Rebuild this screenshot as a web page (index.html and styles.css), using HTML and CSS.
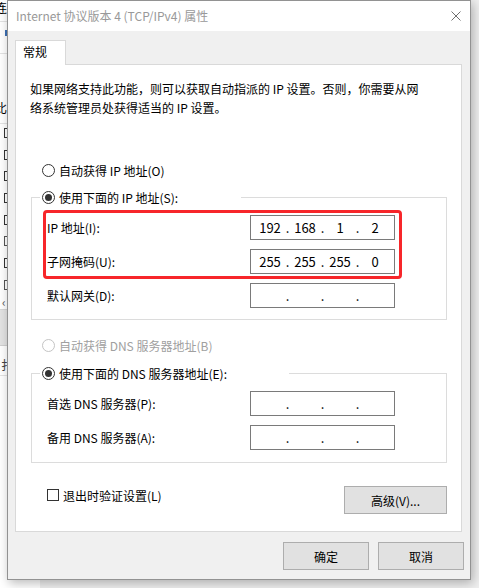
FILE: index.html
```html
<!DOCTYPE html>
<html lang="zh-CN">
<head>
  <meta charset="UTF-8">
  <title>Internet 协议版本 4 (TCP/IPv4) 属性</title>
  <link rel="stylesheet" href="styles.css">
</head>
<body>

<div class="desk">
  <!-- fenêtre derrière la boîte de dialogue -->
  <div class="back-win">
    <div class="bw-title"><span>连</span></div>
    <div class="bw-tool"><span class="bw-mark"></span></div>
    <div class="bw-head"><span>比</span></div>
    <div class="bw-list">
      <span class="bw-box on"></span>
      <span class="bw-box on"></span>
      <span class="bw-box on"></span>
      <span class="bw-box on"></span>
      <span class="bw-box on"></span>
      <span class="bw-box"></span>
      <span class="bw-box on"></span>
      <span class="bw-box"></span>
    </div>
    <div class="bw-scroll">‹</div>
    <div class="bw-band"></div>
    <div class="bw-foot"><span>扌</span></div>
  </div>

  <div class="dialog">
    <div class="titlebar">
      <span class="title">Internet 协议版本 4 (TCP/IPv4) 属性</span>
      <svg class="close" width="10" height="10" viewBox="0 0 10 10">
        <path d="M0.5 0.5 L9.5 9.5 M9.5 0.5 L0.5 9.5" stroke="#707070" stroke-width="1" fill="none"/>
      </svg>
    </div>

    <div class="tabs">
      <div class="tab">常规</div>
    </div>

    <div class="panel">
      <p class="intro">如果网络支持此功能，则可以获取自动指派的 IP 设置。否则，你需要从网<br>络系统管理员处获得适当的 IP 设置。</p>

      <div class="radio first"><span class="dot"></span>自动获得 IP 地址(O)</div>

      <fieldset class="group">
        <legend class="legend-ip"><span class="radio"><span class="dot on"></span>使用下面的 IP 地址(S):</span></legend>
        <div class="hl">
          <div class="field">
            <span>IP 地址(I):</span>
            <div class="ip"><span>192</span><i>.</i><span>168</span><i>.</i><span>1</span><i>.</i><span>2</span></div>
          </div>
          <div class="field">
            <span>子网掩码(U):</span>
            <div class="ip"><span>255</span><i>.</i><span>255</span><i>.</i><span>255</span><i>.</i><span>0</span></div>
          </div>
        </div>
        <div class="field gw">
          <span>默认网关(D):</span>
          <div class="ip"><span></span><i>.</i><span></span><i>.</i><span></span><i>.</i><span></span></div>
        </div>
      </fieldset>

      <div class="radio off"><span class="dot"></span>自动获得 DNS 服务器地址(B)</div>

      <fieldset class="group dns">
        <legend class="legend-dns"><span class="radio"><span class="dot on"></span>使用下面的 DNS 服务器地址(E):</span></legend>
        <div class="rows">
          <div class="field">
            <span>首选 DNS 服务器(P):</span>
            <div class="ip"><span></span><i>.</i><span></span><i>.</i><span></span><i>.</i><span></span></div>
          </div>
          <div class="field">
            <span>备用 DNS 服务器(A):</span>
            <div class="ip"><span></span><i>.</i><span></span><i>.</i><span></span><i>.</i><span></span></div>
          </div>
        </div>
      </fieldset>

      <div class="bottom-row">
        <div class="check"><span class="box"></span>退出时验证设置(L)</div>
        <button class="btn adv">高级(V)...</button>
      </div>
    </div>

    <div class="footer">
      <button class="btn">确定</button>
      <button class="btn">取消</button>
    </div>
  </div>
</div>

</body>
</html>
```

FILE: styles.css
```css
* {
  box-sizing: border-box;
}

body {
  margin: 0;
  width: 479px;
  height: 588px;
  overflow: hidden;
  background: #efefef;
  font-family: "Noto Sans CJK SC", "Noto Sans", sans-serif;
  font-size: 12px;
  color: #000;
}

.desk {
  position: relative;
  width: 479px;
  height: 588px;
}

/* fenêtre du fond */
.back-win {
  width: 40px;
  height: 588px;
  background: #fff;
  overflow: hidden;
  display: flex;
  flex-direction: column;
}

.back-win > div {
  display: flex;
  justify-content: flex-start;
}

.bw-title {
  height: 22px;
  border-bottom: 1px solid #e3e3e3;
  padding-top: 1px;
  line-height: 14px;
}

.bw-title span,
.bw-head span {
  margin-left: -5px;
}

.bw-tool {
  height: 32px;
  border-bottom: 1px solid #e3e3e3;
  padding: 8px 0 0 5px;
}

.bw-mark {
  width: 2px;
  height: 6px;
  background: #3c6fb4;
}

.bw-head {
  height: 70px;
  border-bottom: 1px solid #e3e3e3;
  align-items: flex-end;
  padding-bottom: 8px;
  line-height: 14px;
}

.bw-list {
  flex-direction: column;
  padding: 4px 0 0 4px;
  gap: 11.7px;
}

.bw-box {
  width: 10px;
  height: 10px;
  border: 1px solid #555;
  background: #fff;
}

.bw-box.on {
  border-color: #333;
  background: linear-gradient(#fff 30%, #333 30%, #333 60%, #fff 60%) no-repeat 3px 1px / 3px 6px, #fff;
}

.bw-scroll {
  height: 14px;
  padding-left: 2px;
  margin-top: 6px;
  line-height: 12px;
  color: #555;
  border-bottom: 1px solid #d6d6d6;
}

.bw-band {
  height: 36px;
  background: #e3e3e3;
  border-bottom: 1px solid #d0d0d0;
}

.bw-foot {
  height: 30px;
  padding: 10px 0 0 1px;
  color: #444;
  border-bottom: 1px solid #e3e3e3;
}

/* boîte de dialogue */
.dialog {
  position: absolute;
  left: 7px;
  top: 0;
  width: 464px;
  height: 580px;
  border: 1px solid #929292;
  background: #f0f0f0;
  box-shadow: 2px 3px 10px rgba(0, 0, 0, 0.28);
  display: flex;
  flex-direction: column;
}

.titlebar {
  height: 30px;
  flex: none;
  background: #fff;
  display: flex;
  align-items: center;
  padding: 0 9px 1px 8px;
  color: #999;
}

.titlebar .close {
  margin-left: auto;
}

.tabs {
  display: flex;
  height: 24px;
  flex: none;
  margin: 9px 0 0 7px;
}

.tab {
  position: relative;
  z-index: 1;
  width: 51px;
  height: 25px;
  background: #fff;
  border: 1px solid #d9d9d9;
  border-bottom: none;
  padding-left: 7px;
  line-height: 22px;
}

.panel {
  flex: none;
  height: 468px;
  margin: 0 8px 0 7px;
  background: #fff;
  border: 1px solid #d9d9d9;
  padding: 0 14px 0 15px;
}

.intro {
  margin: 14px 0 0 -1px;
  line-height: 19px;
}

.radio {
  display: flex;
  align-items: center;
  height: 16px;
  gap: 4px;
  padding-left: 11px;
}

.radio.first {
  margin-top: 45px;
}

.radio.off {
  margin-top: 17px;
  color: #a0a0a0;
}

.dot {
  width: 13px;
  height: 13px;
  border-radius: 50%;
  border: 1px solid #333;
  background: #fff;
  display: flex;
  align-items: center;
  justify-content: center;
}

.radio.off .dot {
  border-color: #c4c4c4;
}

.dot.on::after {
  content: "";
  width: 7px;
  height: 7px;
  border-radius: 50%;
  background: #333;
}

.group {
  margin: 11px 0 0 0;
  padding: 5px 51px 11px 15px;
  border: 1px solid #dcdcdc;
  min-width: 0;
}

.group.dns {
  margin-top: 12px;
  padding-top: 10px;
  padding-bottom: 12px;
}

legend {
  margin-left: -7px;
  padding: 0 0 0 2px;
  height: 16px;
}

legend .radio {
  padding-left: 0;
}

.legend-ip {
  width: 201px;
}

.legend-dns {
  width: 249px;
}

.field {
  display: flex;
  align-items: center;
  height: 25px;
}

.hl {
  display: flex;
  flex-direction: column;
  gap: 9px;
  margin: 0 -7px 0 -4px;
  padding: 2px 4px 2px 1px;
  border: 3px solid #f7262a;
  border-radius: 4px;
}

.field.gw {
  margin-top: 4px;
}

.rows {
  display: flex;
  flex-direction: column;
  gap: 9px;
}

.ip {
  margin-left: auto;
  width: 145px;
  height: 25px;
  border: 1px solid #7a7a7a;
  background: #fff;
  display: flex;
  align-items: center;
  padding-left: 5px;
  font-size: 13px;
}

.ip span {
  width: 28px;
  text-align: center;
}

.ip i {
  width: 7px;
  font-style: normal;
  text-align: center;
}

.bottom-row {
  display: flex;
  justify-content: space-between;
  align-items: flex-start;
  margin-top: 23px;
  padding-left: 16px;
}

.check {
  display: flex;
  align-items: center;
  height: 16px;
  margin-top: 1px;
  gap: 4px;
}

.check .box {
  width: 12px;
  height: 12px;
  border: 1px solid #333;
  background: #fff;
}

.btn {
  font: inherit;
  color: #000;
  background: #e1e1e1;
  border: 1px solid #adadad;
  width: 86px;
  height: 28px;
  padding: 0;
}

.btn.adv {
  width: 103px;
}

.footer {
  display: flex;
  justify-content: flex-end;
  gap: 9px;
  margin-top: 10px;
  padding-right: 6px;
}
```
